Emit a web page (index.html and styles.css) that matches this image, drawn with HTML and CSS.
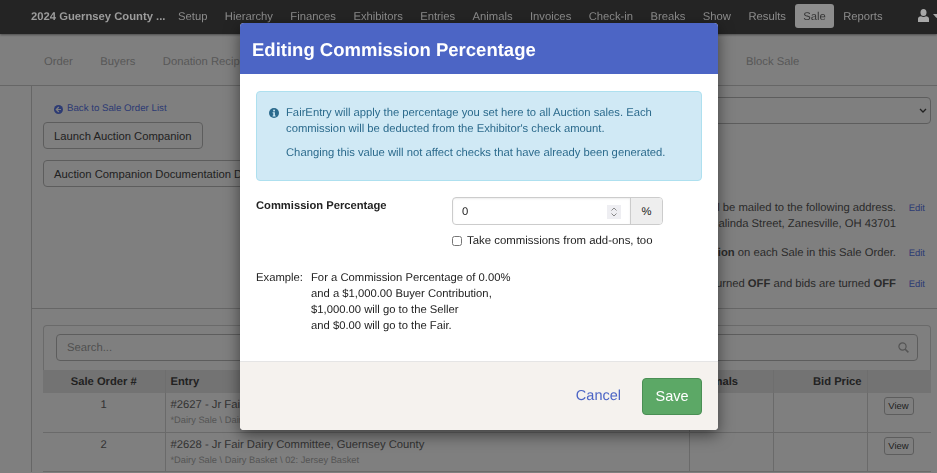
FILE: index.html
```html
<!DOCTYPE html>
<html lang="en">
<head>
<meta charset="utf-8">
<title>Editing Commission Percentage</title>
<link rel="stylesheet" href="styles.css">
</head>
<body>
<div class="page">
  <header class="navbar">
    <span class="brand">2024 Guernsey County ...</span>
    <nav class="nav">
      <a>Setup</a><a>Hierarchy</a><a>Finances</a><a>Exhibitors</a><a>Entries</a><a>Animals</a><a>Invoices</a><a>Check-in</a><a>Breaks</a><a>Show</a><a>Results</a><a class="active">Sale</a><a>Reports</a>
    </nav>
    <span class="user">
      <svg width="11" height="13" viewBox="0 0 11 13"><ellipse cx="5.500" cy="3.600" rx="3" ry="3.500" fill="currentColor"/><path d="M0 13V9.800C0 8.300 1.300 7.400 3 7.200c1.500 1 3.500 1 5 0 1.700.2 3 1.100 3 2.600V13z" fill="currentColor"/></svg>
      <svg class="caret" width="7" height="4" viewBox="0 0 7 4"><path d="M0 0h7L3.500 4z" fill="currentColor"/></svg>
    </span>
  </header>
  <div class="subnav">
    <a>Order</a><a>Buyers</a><a>Donation Recipients</a><a class="block">Block Sale</a>
  </div>
  <div class="main">
    <aside class="side"></aside>
    <div class="content">
      <section class="top">
        <div class="top-left">
          <a class="back">
            <svg width="9" height="9" viewBox="0 0 9 9"><circle cx="4.500" cy="4.500" r="4.500" fill="currentColor"/><path d="M4.800 2 2.300 4.500 4.800 7M2.600 4.500H7" fill="none" stroke="#fff" stroke-width="1.200"/></svg>
            Back to Sale Order List
          </a>
          <button class="btn">Launch Auction Companion</button>
          <button class="btn">Auction Companion Documentation Download</button>
        </div>
        <div class="top-right">
          <div class="select">
            <svg width="8" height="5" viewBox="0 0 8 5"><path d="M1 1l3 3 3-3" fill="none" stroke="#444" stroke-width="1.300"/></svg>
          </div>
          <div class="setting first">
            <div class="setting-text">Checks for this Sale Order will be mailed to the following address.<br>123 Malinda Street, Zanesville, OH 43701</div><a class="edit">Edit</a>
          </div>
          <div class="setting second">
            <div class="setting-text">The Fair takes a <b>0.00% Commission</b> on each Sale in this Sale Order.</div><a class="edit">Edit</a>
          </div>
          <div class="setting">
            <div class="setting-text">Auction Companion is turned <b>OFF</b> and bids are turned <b>OFF</b></div><a class="edit">Edit</a>
          </div>
        </div>
      </section>
      <section class="list">
        <div class="search-panel">
          <div class="search">
            <span>Search...</span>
            <svg width="11" height="11" viewBox="0 0 11 11"><circle cx="4.500" cy="4.500" r="3.600" fill="none" stroke="#a8a8a8" stroke-width="1.200"/><path d="M7.200 7.200l3.200 3.200" stroke="#a8a8a8" stroke-width="1.500"/></svg>
          </div>
        </div>
        <table class="table">
          <colgroup><col class="c1"><col class="c2"><col class="c3"><col class="c4"><col class="c5"></colgroup>
          <thead>
            <tr><th class="center">Sale Order #</th><th>Entry</th><th class="animals">Animals</th><th class="right">Bid Price</th><th></th></tr>
          </thead>
          <tbody>
            <tr>
              <td class="center">1</td>
              <td><div>#2627 - Jr Fair Dairy Committee, Guernsey County</div><div class="sub">*Dairy Sale \ Dairy Basket \ 01: Holstein Basket</div></td>
              <td></td><td></td><td class="center"><button class="view">View</button></td>
            </tr>
            <tr>
              <td class="center">2</td>
              <td><div>#2628 - Jr Fair Dairy Committee, Guernsey County</div><div class="sub">*Dairy Sale \ Dairy Basket \ 02: Jersey Basket</div></td>
              <td></td><td></td><td class="center"><button class="view">View</button></td>
            </tr>
          </tbody>
        </table>
      </section>
    </div>
  </div>
</div>

<div class="overlay"></div>

<div class="modal">
  <div class="modal-head">Editing Commission Percentage</div>
  <div class="modal-body">
    <div class="alert">
      <svg class="info" width="10" height="10" viewBox="0 0 10 10"><circle cx="5" cy="5" r="5" fill="currentColor"/><rect x="4.200" y="1.700" width="1.700" height="1.700" fill="#d0e9f5"/><path d="M3.600 4.300h2.300v3.200h.7v.9H3.600v-.9h.7V5.200h-.7z" fill="#d0e9f5"/></svg>
      <div class="alert-text">
        <p>FairEntry will apply the percentage you set here to all Auction sales. Each commission will be deducted from the Exhibitor's check amount.</p>
        <p>Changing this value will not affect checks that have already been generated.</p>
      </div>
    </div>
    <div class="field">
      <label class="field-label">Commission Percentage</label>
      <div class="field-control">
        <div class="input-group">
          <div class="input">
            <span>0</span>
            <span class="spin"><svg width="8" height="12" viewBox="0 0 8 12"><path d="M1.500 4.500 4 2l2.500 2.500M1.500 7.500 4 10l2.500-2.500" fill="none" stroke="#888" stroke-width="1"/></svg></span>
          </div>
          <div class="addon">%</div>
        </div>
        <label class="check"><input type="checkbox"> Take commissions from add-ons, too</label>
      </div>
    </div>
    <div class="example">
      <div class="example-label">Example:</div>
      <div>For a Commission Percentage of 0.00%<br>and a $1,000.00 Buyer Contribution,<br>$1,000.00 will go to the Seller<br>and $0.00 will go to the Fair.</div>
    </div>
  </div>
  <div class="modal-foot">
    <a class="cancel">Cancel</a>
    <button class="save">Save</button>
  </div>
</div>
</body>
</html>
```
FILE: styles.css
```css
* { box-sizing: border-box; }
html, body { margin: 0; height: 100%; overflow: hidden; }
body { font-family: "Liberation Sans", Arial, sans-serif; font-size: 11.25px; line-height: 16px; color: #333; background: #fff; text-rendering: geometricPrecision; }
.page { height: 473px; overflow: hidden; }

.navbar { display: flex; align-items: center; height: 34px; background: #242424; color: #8c8c8c; padding: 0 0 2px 31px; position: relative; z-index: 2; box-shadow: 0 1px 2px rgba(0, 0, 0, .4); }
.brand { font-weight: bold; width: 139px; white-space: nowrap; color: #9c9c9c; padding-top: 1px; }
.nav { display: flex; align-items: center; gap: 1.400px; }
.nav a { padding: 5px 8px 3px; height: 24px; border-radius: 3px; white-space: nowrap; display: block; }
.nav a.active { background: #8c8c8c; color: #333; }
.user { position: absolute; left: 918px; top: 9px; display: flex; align-items: center; gap: 4px; color: #a8a8a8; }
.caret { flex: none; }

.subnav { display: flex; align-items: center; height: 52px; border-bottom: 1px solid #ccc; padding: 5px 0 0 44px; color: #b0b0b0; gap: 27.500px; white-space: nowrap; background: #fff; position: relative; }
.subnav a.block { position: absolute; left: 746px; }

.main { display: flex; }
.side { width: 32px; flex: none; border-right: 1px solid #ccc; background: #fff; }
.content { flex: 1; min-width: 0; }

.top { display: flex; justify-content: space-between; height: 223px; border-bottom: 1px solid #ccc; padding: 0 6px 0 11px; }
.top-left { display: flex; flex-direction: column; align-items: flex-start; padding-top: 16px; }
.back { display: flex; align-items: center; gap: 4px; color: #5a76e8; font-size: 9.700px; margin: 0 0 6px 11px; line-height: 14px; }
.btn { font: inherit; color: #444; background: #fff; border: 1px solid #bbb; border-radius: 4px; height: 27px; padding: 0 10px; margin-bottom: 11px; white-space: nowrap; }

.top-right { width: 500px; padding-top: 11px; }
.select { height: 27px; border: 1px solid #bbb; border-radius: 4px; display: flex; align-items: center; justify-content: flex-end; padding-right: 3px; }
.setting { display: flex; justify-content: flex-end; align-items: flex-start; margin-bottom: 14px; padding-right: 6px; color: #555; }
.setting.first { margin-top: 76px; margin-bottom: 13px; }
.setting-text { text-align: right; white-space: nowrap; }
.edit { width: 29px; margin-top: 1px; text-align: right; color: #5a76e8; font-size: 9.500px; }

.list { padding: 16px 6px 0 11px; }
.search-panel { border: 1px solid #d4d4d4; border-bottom: 0; border-radius: 4px 4px 0 0; padding: 8px 12px; height: 45px; }
.search { display: flex; align-items: center; justify-content: space-between; height: 27px; border: 1px solid #bbb; border-radius: 4px; padding: 0 8px 0 10px; color: #a0a0a0; }
.table { width: 888px; border-collapse: collapse; table-layout: fixed; color: #666; }
.c1 { width: 122px; } .c2 { width: 524px; } .c3 { width: 84px; } .c4 { width: 94px; } .c5 { width: 64px; }
.table th { height: 23px; padding: 0 5px; background: #e6e6e6; color: #444; text-align: left; font-size: 11.200px; border-left: 1px solid #ddd; }
.table td { height: 39px; padding: 4px 5px 3px; border: 1px solid #d4d4d4; border-width: 0 0 1px 1px; vertical-align: top; }
.table th:first-child, .table td:first-child { border-left: 0; }
.table th.center, .table td.center { text-align: center; }
.table th.right { text-align: right; }
.table th.animals { text-align: right; padding-right: 38px; }
.sub { font-size: 9.300px; line-height: 14px; color: #aaa; }
.view { font: inherit; font-size: 9.500px; color: #444; background: #fff; border: 1px solid #bbb; border-radius: 3px; height: 18px; width: 30px; padding: 0; margin: 0; display: block; margin-left: 11px; }

.overlay { position: fixed; inset: 0; background: rgba(0, 0, 0, .5); z-index: 1; }
.modal { position: fixed; left: 240px; top: 23px; width: 478px; background: #fff; border-radius: 4px; box-shadow: 0 5px 15px rgba(0, 0, 0, .5); overflow: hidden; z-index: 3; }
.modal-head { height: 51px; background: #4c65c5; color: #fff; font-size: 18.500px; font-weight: bold; line-height: 53px; padding-left: 12px; }
.modal-body { height: 287px; padding: 17px 16px 0; color: #222; }
.alert { display: flex; gap: 7px; height: 90px; background: #d0e9f5; border: 1px solid #aee0ef; border-radius: 4px; padding: 13px 12px 12px; color: #2b6a8c; }
.info { flex: none; margin-top: 3px; }
.alert-text p { margin: 0 0 8px; }
.field { display: flex; margin-top: 16px; }
.field-label { width: 196px; flex: none; font-weight: bold; font-size: 11.200px; padding-top: 1px; }
.field-control { flex: 1; }
.input-group { display: flex; width: 211px; height: 28px; border: 1px solid #ccc; border-radius: 4px; overflow: hidden; }
.input { flex: 1; display: flex; align-items: center; justify-content: space-between; padding: 1px 9px 0; box-shadow: inset 0 1px 2px rgba(0, 0, 0, .08); }
.spin { display: flex; align-items: center; justify-content: center; width: 14px; height: 14px; background: #eeeef2; }
.addon { width: 32px; flex: none; display: flex; align-items: center; justify-content: center; padding-top: 1px; background: #eee; border-left: 1px solid #ccc; }
.check { display: flex; align-items: center; gap: 5px; margin-top: 8px; font-size: 11.400px; }
.check input { width: 10px; height: 10px; margin: 0; }
.example { display: flex; margin-top: 21px; }
.example-label { width: 55px; flex: none; }
.modal-foot { height: 69px; background: #f5f2ee; border-top: 1px solid #e5e5e5; display: flex; align-items: center; justify-content: flex-end; gap: 21px; padding-right: 16px; }
.cancel { color: #4c65c5; font-size: 14.500px; }
.save { font: inherit; font-size: 14.500px; color: #fff; background: #5ca866; border: 1px solid #4a8f54; border-radius: 4px; width: 60px; height: 37px; padding: 0; }
```
